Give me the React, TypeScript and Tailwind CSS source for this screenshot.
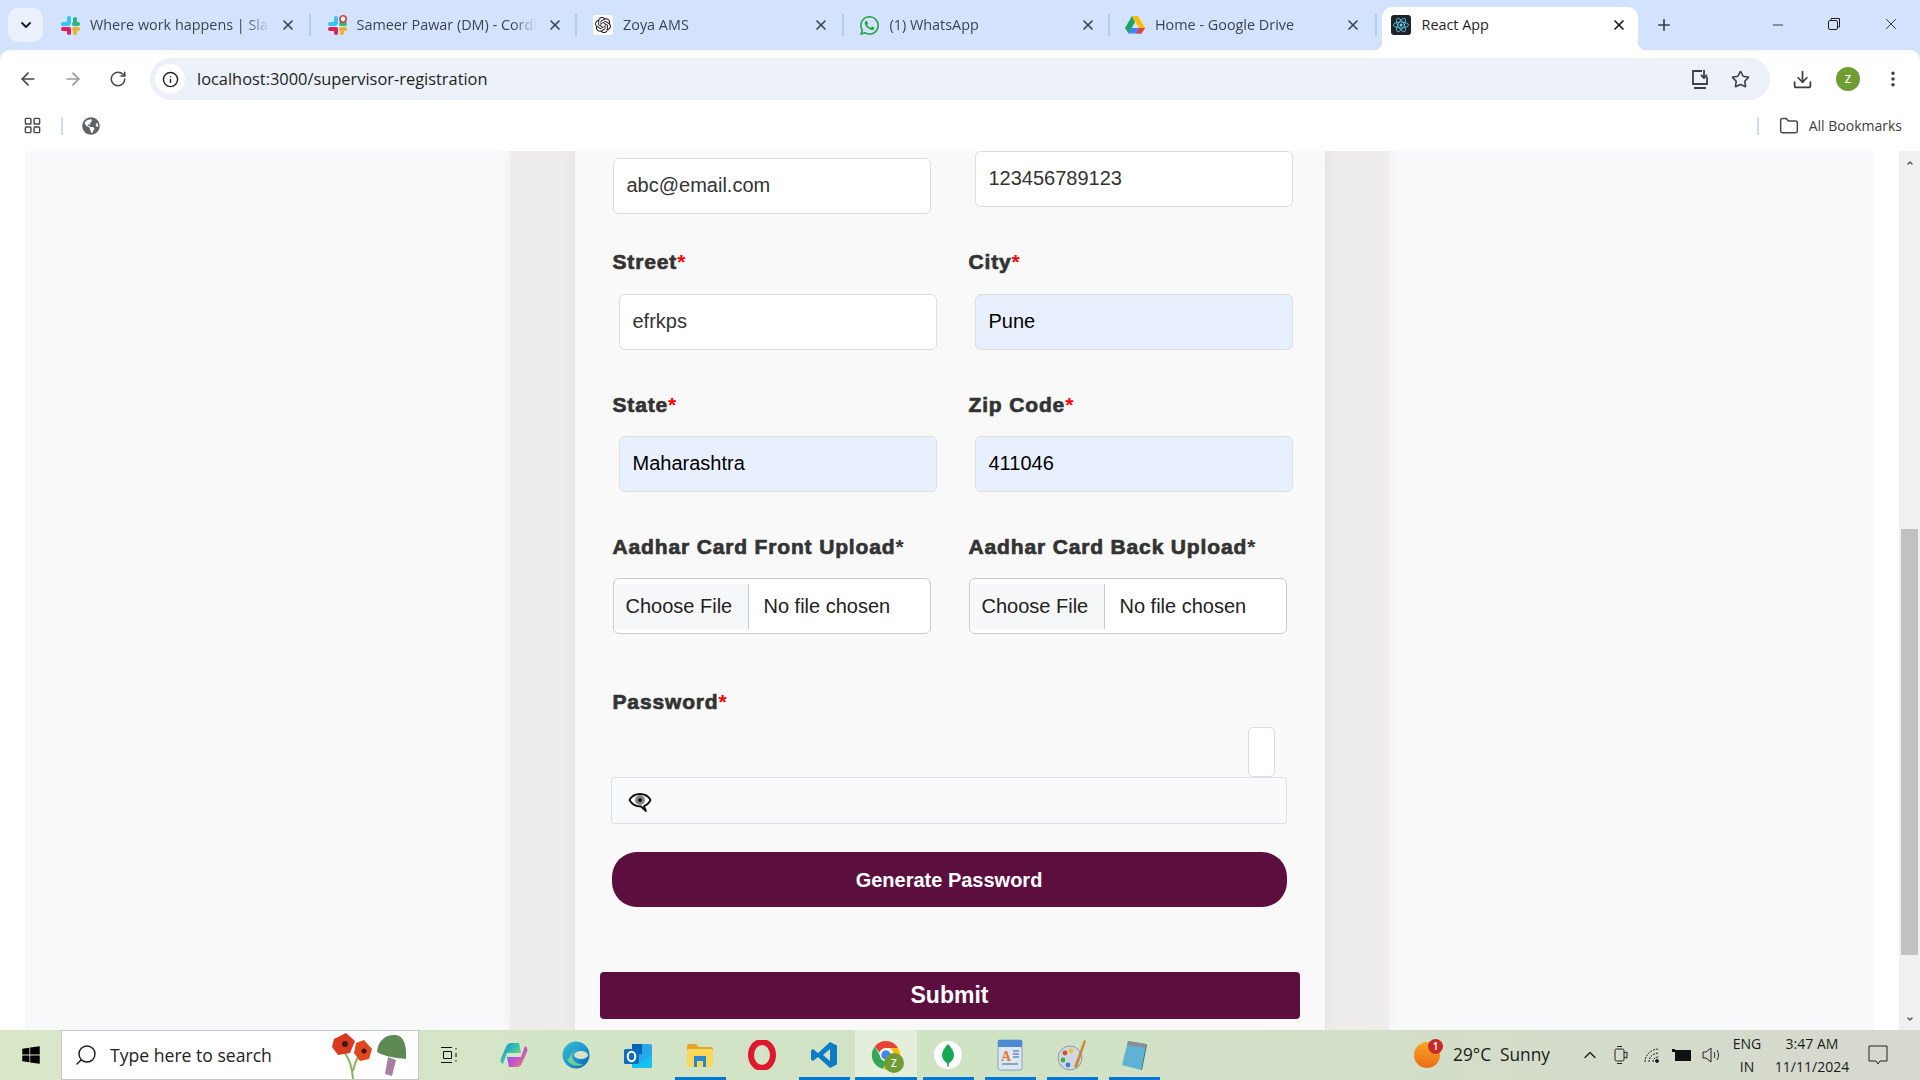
import type { ReactNode } from "react";
import { ArrowLeft, ArrowRight, ChevronDown, ChevronUp, Download, Folder, Info, LayoutGrid, Minus, MoreVertical, Plus, RotateCw, Search, Star, X } from "lucide-react";
import { SiOpenai, SiWhatsapp } from "react-icons/si";
import { FaGlobeAmericas, FaWindows } from "react-icons/fa";

const ui = "font-['Open_Sans',sans-serif]";
const arial = "font-['Liberation_Sans',Arial,sans-serif]";

const Slack = ({ dot = false }: { dot?: boolean }) => (
  <svg width="22" height="22" viewBox="0 0 22 22" className="shrink-0">
    <rect x="8" y="2" width="4" height="9" rx="2" fill="#36c5f0" />
    <rect x="2" y="8" width="9" height="4" rx="2" fill="#36c5f0" />
    <rect x="14" y="3" width="4" height="9" rx="2" fill="#2eb67d" />
    <rect x="13" y="8" width="8" height="4" rx="2" fill="#2eb67d" />
    <rect x="8" y="13" width="4" height="8" rx="2" fill="#e01e5a" />
    <rect x="2" y="13" width="9" height="4" rx="2" fill="#e01e5a" />
    <rect x="14" y="13" width="4" height="8" rx="2" fill="#ecb22e" />
    <rect x="13" y="13" width="8" height="4" rx="2" fill="#ecb22e" />
    {dot && <circle cx="17" cy="5" r="3.2" fill="#fff" stroke="#e3342f" strokeWidth="1.6" />}
  </svg>
);

const Drive = () => (
  <svg width="20" height="20" viewBox="0 0 20 20" className="shrink-0">
    <polygon points="7,1 13,1 20,13 14,13" fill="#fbbc04" />
    <polygon points="7,1 10,7 3.5,18.5 0,13" fill="#1ea362" />
    <polygon points="6,13 20,13 16.5,18.5 3.5,18.5" fill="#4285f4" />
    <polygon points="14,13 20,13 16.5,18.5 11,18.5" fill="#ea4335" />
  </svg>
);

const ReactLogo = () => (
  <span className="flex h-[20px] w-[20px] shrink-0 items-center justify-center rounded-[3px] bg-[#20232a]">
    <svg width="18" height="18" viewBox="-12 -12 24 24" fill="none" stroke="#61dafb" strokeWidth="1">
      <circle r="2" fill="#61dafb" stroke="none" />
      <ellipse rx="10" ry="4" />
      <ellipse rx="10" ry="4" transform="rotate(60)" />
      <ellipse rx="10" ry="4" transform="rotate(120)" />
    </svg>
  </span>
);

type TabProps = { icon: ReactNode; title: string; pl?: string };

const Tab = ({ icon, title, pl = "pl-[15px]" }: TabProps) => (
  <div className={`flex h-[50px] w-[266.5px] shrink-0 items-center ${pl}`}>
    <div className="flex h-[22px] w-[22px] shrink-0 items-center justify-center">{icon}</div>
    <div className="ml-[9px] w-[180px] overflow-hidden pb-[1px] whitespace-nowrap text-[14.4px] text-[#3f4449] [mask-image:linear-gradient(to_right,black_155px,transparent_180px)]">
      {title}
    </div>
    <X size={16} strokeWidth={2.4} className="ml-[10px] shrink-0 text-[#3c4043]" />
    <div className="ml-auto h-[22px] w-[2px] bg-[#b2cbf5]" />
  </div>
);

const Label = ({ text, star = "text-[#ff0000]" }: { text: string; star?: string }) => (
  <div className={`h-6 text-[21px] leading-6 font-bold tracking-[0.85px] whitespace-nowrap text-[#333] [-webkit-text-stroke:0.7px_#333] ${arial}`}>
    {text}
    <span className={`tracking-normal [-webkit-text-stroke:0] ${star}`}>*</span>
  </div>
);

const TextBox = ({ value, filled = false, cls = "" }: { value: string; filled?: boolean; cls?: string }) => (
  <div
    className={`flex h-[56px] w-[318px] items-center rounded-[6px] border border-[#dddddd] px-[13px] pb-[2px] text-[20px] ${arial} ${
      filled ? "bg-[#e8f0fe] text-black" : "bg-white text-[#333]"
    } ${cls}`}
  >
    {value}
  </div>
);

const FileBox = () => (
  <div className={`mt-[19px] flex h-[56px] w-[318px] items-center rounded-[6px] border border-[#cccccc] bg-white px-[1px] text-[20px] text-[#222] ${arial}`}>
    <div className="flex h-[45px] w-[134px] items-center border-r border-[#c8c8c8] bg-[#f6f7f9] pl-[11px]">Choose File</div>
    <div className="pl-[15px]">No file chosen</div>
  </div>
);

const EyeBubble = () => (
  <svg width="24" height="24" viewBox="0 0 24 24" fill="none">
    <path d="M1.5 11C4 6.5 8 5 12 5s8 1.5 10.5 6c-1.5 3-3.5 5-6.5 6l2 5-5-4.500C8 17.500 4 15.500 1.500 11z" fill="#fff" stroke="#111" strokeWidth="1.800" strokeLinejoin="round" />
    <circle cx="12" cy="11" r="5" fill="#888" />
    <circle cx="12" cy="11" r="2" fill="#111" />
  </svg>
);

const Supervisor = () => (
  <div className="flex w-[879px] justify-center bg-[#eeedeb] shadow-[0_0_10px_#eeedeb]">
    <div className="w-[750px] bg-[#f9f9f9] pl-[38px] shadow-[0_0_14px_rgba(0,0,0,0.07)]">
      <div className="grid grid-cols-[356px_1fr]">
        <div className="h-[99px] pt-[7px]">
          <TextBox value="abc@email.com" />
        </div>
        <div className="h-[99px]">
          <TextBox value="123456789123" cls="ml-[6px]" />
        </div>

        <div>
          <Label text="Street" />
          <TextBox value="efrkps" cls="mt-5 ml-[6px]" />
        </div>
        <div>
          <Label text="City" />
          <TextBox value="Pune" filled cls="mt-5 ml-[6px]" />
        </div>

        <div className="mt-[43px]">
          <Label text="State" />
          <TextBox value="Maharashtra" filled cls="mt-[19px] ml-[6px]" />
        </div>
        <div className="mt-[43px]">
          <Label text="Zip Code" />
          <TextBox value="411046" filled cls="mt-[19px] ml-[6px]" />
        </div>

        <div className="mt-[43px]">
          <Label text="Aadhar Card Front Upload" star="text-[#333]" />
          <FileBox />
        </div>
        <div className="mt-[43px]">
          <Label text="Aadhar Card Back Upload" star="text-[#333]" />
          <FileBox />
        </div>
      </div>

      <div className="mt-[56px]">
        <Label text="Password" />
        <div className="mt-[13px] -ml-[1px] flex w-[675px] justify-end pr-[12px]">
          <div className="h-[50px] w-[27px] rounded-[5px] border border-[#dddddd] bg-white" />
        </div>
        <div className="-ml-[2px] flex h-[47px] w-[676px] items-center rounded-[3px] border border-[#e0e0e0] bg-[#f8f9fb] pl-[16px]">
          <EyeBubble />
        </div>
        <button className={`-ml-[1px] mt-[28px] block h-[55px] w-[675px] rounded-[25px] bg-[#5c0f3f] text-center text-[20px] font-bold text-white ${arial}`}>
          Generate Password
        </button>
        <button className={`-ml-[13px] mt-[65px] block h-[47px] w-[700px] rounded-[4px] bg-[#5c0f3f] text-center text-[23px] font-bold text-white ${arial}`}>
          Submit
        </button>
      </div>
    </div>
  </div>
);

type SlotProps = { children: ReactNode; bar?: boolean; active?: boolean };

const Slot = ({ children, bar = false, active = false }: SlotProps) => (
  <div className={`relative flex h-[50px] w-[62px] shrink-0 items-center justify-center ${active ? "bg-white/40" : ""}`}>
    {children}
    {bar && <span className={`absolute bottom-0 h-[3px] bg-[#0078d4] ${active ? "w-full" : "w-[51px]"}`} />}
  </div>
);

const Poppies = () => (
  <svg width="84" height="48" viewBox="0 0 84 48" className="shrink-0">
    <path d="M25 48C24 36 22 30 16 20M25 40C27 32 28 28 34 22" stroke="#8bb65a" strokeWidth="2" fill="none" />
    <path d="M6 8L18 2l9 8-5 12-12 2-6-8z" fill="#d8391f" />
    <circle cx="17" cy="13" r="3" fill="#3a1a10" />
    <path d="M28 12l8-3 8 9-3 10-9 2-6-8z" fill="#e0471f" />
    <circle cx="36" cy="20" r="2.500" fill="#3a1a10" />
    <path d="M49 21C50 9 58 3 68 4c7 1 11 9 10 24-8-1-21-2-29-7z" fill="#5d8a53" />
    <path d="M60 26l8 3-4 16-7-2z" fill="#a97fa0" />
  </svg>
);

const Copilot = () => (
  <svg width="28" height="28" viewBox="0 0 28 28">
    <defs>
      <linearGradient id="cpA" x1="0" y1="0" x2="1" y2="1">
        <stop offset="0" stopColor="#1d7fe0" />
        <stop offset="0.5" stopColor="#37c6b0" />
        <stop offset="1" stopColor="#f5c22c" />
      </linearGradient>
      <linearGradient id="cpB" x1="0" y1="0" x2="1" y2="1">
        <stop offset="0" stopColor="#3f7cf0" />
        <stop offset="0.5" stopColor="#c04fd8" />
        <stop offset="1" stopColor="#f28a4a" />
      </linearGradient>
    </defs>
    <path d="M11 2h8l2 10H7L3 23c-2-1-3-3-2-6L6 6c1-3 3-4 5-4z" fill="url(#cpA)" />
    <path d="M17 26H9l-2-10h14l4-11c2 1 3 3 2 6l-5 11c-1 3-3 4-5 4z" fill="url(#cpB)" />
  </svg>
);

const Edge = () => (
  <svg width="28" height="28" viewBox="0 0 28 28">
    <defs>
      <linearGradient id="edge" x1="0" y1="0" x2="1" y2="1">
        <stop offset="0" stopColor="#36c4c0" />
        <stop offset="0.6" stopColor="#1c8fd8" />
        <stop offset="1" stopColor="#0c59a4" />
      </linearGradient>
    </defs>
    <circle cx="14" cy="14" r="13.500" fill="url(#edge)" />
    <path d="M27 16c-2-6-7-8-12-7-4 1-6 5-4 9 1 3 6 6 11 5-7 4-15 1-17-5 3 1 3-7 9-9 6-1 11 1 13 7z" fill="#7fe07a" opacity="0.800" />
    <ellipse cx="19" cy="14" rx="7" ry="4" fill="#d6e5c5" />
  </svg>
);

const Outlook = () => (
  <svg width="30" height="30" viewBox="0 0 30 30">
    <rect x="9" y="4" width="20" height="24" rx="2" fill="#28a8ea" />
    <rect x="9" y="4" width="10" height="10" fill="#0364b8" />
    <path d="M9 15l10 7 10-7v11a2 2 0 0 1-2 2H11a2 2 0 0 1-2-2z" fill="#14c2f0" />
    <rect x="1" y="9" width="15" height="15" rx="1.500" fill="#0f6cbd" />
    <ellipse cx="8.500" cy="16.500" rx="3.800" ry="4.800" fill="none" stroke="#fff" strokeWidth="2" />
  </svg>
);

const Explorer = () => (
  <svg width="28" height="28" viewBox="0 0 28 28">
    <path d="M1 5a2 2 0 0 1 2-2h7l3 3h12a2 2 0 0 1 2 2v3H1z" fill="#e3a72c" />
    <rect x="1" y="8" width="26" height="18" rx="2" fill="#fbd75b" />
    <path d="M8 15h12v11h-3v-6h-6v6H8z" fill="#2b87d3" />
  </svg>
);

const Opera = () => (
  <svg width="28" height="30" viewBox="0 0 28 30">
    <ellipse cx="14" cy="15" rx="11" ry="13" fill="none" stroke="#e0182d" strokeWidth="6" />
  </svg>
);

const VSCode = () => (
  <svg width="28" height="28" viewBox="0 0 28 28">
    <path d="M20 1l7 3.500v19L20 27 8 16l-5 4-2-1.500V9.500L3 8l5 4zM20 8l-7 6 7 6z" fill="#0a7cc8" />
  </svg>
);

const ChromeZ = () => (
  <div className="relative h-[30px] w-[30px]">
    <svg width="30" height="30" viewBox="0 0 30 30">
      <path d="M15 1a14 14 0 0 1 12 7H15a7 7 0 0 0-6.500 4.500L3.800 6.500A14 14 0 0 1 15 1z" fill="#ea4335" />
      <path d="M3.800 6.500l6 10.500a6 6 0 0 0 6 4l-3.800 7.800A14 14 0 0 1 3.800 6.500z" fill="#34a853" />
      <path d="M27 8a14 14 0 0 1-15 21l6-10a6 6 0 0 0 1-11z" fill="#fbbc04" />
      <circle cx="15" cy="15" r="5.500" fill="#4285f4" stroke="#fff" strokeWidth="1.500" />
    </svg>
    <span className="absolute -right-[3px] -bottom-[3px] flex h-[20px] w-[20px] items-center justify-center rounded-full bg-[#6f9c35] text-[10px] font-semibold text-white">Z</span>
  </div>
);

const Mongo = () => (
  <svg width="30" height="30" viewBox="0 0 30 30">
    <circle cx="15" cy="15" r="14" fill="#fff" />
    <path d="M15 4c4 4 6 8 6 11 0 4-3 7-5 8l-.500 4h-1l-.500-4c-2-1-5-4-5-8 0-3 2-7 6-11z" fill="#13aa52" />
  </svg>
);

const WordPad = () => (
  <svg width="28" height="32" viewBox="0 0 28 32">
    <rect x="2" y="1" width="24" height="30" rx="2" fill="#dbe7f3" stroke="#8ba6c3" />
    <rect x="2" y="1" width="24" height="7" fill="#4d8bd0" />
    <text x="5" y="22" fontSize="14" fontWeight="700" fill="#e8752a" fontFamily="Liberation Serif">A</text>
    <path d="M17 12h6M17 15h6M17 18h6M6 25h16" stroke="#6a8fb8" strokeWidth="1.400" />
  </svg>
);

const Palette = () => (
  <svg width="32" height="34" viewBox="0 0 32 34">
    <ellipse cx="14" cy="20" rx="12" ry="12" fill="#cfd8df" stroke="#8c9aa5" />
    <circle cx="9" cy="15" r="2.400" fill="#d9472f" />
    <circle cx="15" cy="13" r="2.400" fill="#f0c12c" />
    <circle cx="7" cy="22" r="2.400" fill="#3db04a" />
    <circle cx="12" cy="27" r="2.400" fill="#3a7bd5" />
    <path d="M28 2l2 1-9 27-3-1z" fill="#c98a3c" />
  </svg>
);

const Notepad = () => (
  <svg width="28" height="32" viewBox="0 0 28 32">
    <path d="M8 2l18 3-5 26-19-5z" fill="#5fb2d4" />
    <path d="M8 2l18 3-1 4L7 6z" fill="#8a8f96" />
    <path d="M21 31l5-26 1 1-5 25z" fill="#3d6f85" />
  </svg>
);

const App = () => {
  return (
    <div className="flex h-screen w-[1920px] flex-col overflow-hidden bg-[#d3e3fd]">
      {/* tab strip */}
      <div className={`flex h-[50px] shrink-0 items-start ${ui}`}>
        <div className="mt-[8px] ml-[8px] flex h-[34px] w-[35px] items-center justify-center rounded-[10px] bg-[#eaf1fc]">
          <ChevronDown size={16} strokeWidth={3} className="text-[#1f1f1f]" />
        </div>
        <div className="ml-[1px] flex">
          <Tab icon={<Slack />} title="Where work happens | Slack" />
          <Tab icon={<Slack dot />} title="Sameer Pawar (DM) - Cordly" />
          <Tab icon={<span className="flex h-[20px] w-[20px] items-center justify-center rounded-[3px] bg-white"><SiOpenai size={16} color="#222" /></span>} title="Zoya AMS" />
          <Tab icon={<SiWhatsapp size={19} color="#25a244" />} title="(1) WhatsApp" />
          <Tab icon={<Drive />} title="Home - Google Drive" pl="pl-[14px]" />
        </div>
        <div className="relative mt-[7px] ml-[5px] flex h-[43px] w-[256px] shrink-0 items-center rounded-t-[10px] bg-white pb-[7px] pl-[9px]">
          <span className="absolute bottom-0 -left-[8px] h-[8px] w-[8px] bg-[radial-gradient(circle_at_0_0,transparent_8px,white_8.500px)]" />
          <span className="absolute -right-[8px] bottom-0 h-[8px] w-[8px] bg-[radial-gradient(circle_at_100%_0,transparent_8px,white_8.500px)]" />
          <ReactLogo />
          <div className="ml-[11px] w-[177px] text-[14.4px] text-[#1f1f1f]">React App</div>
          <X size={16} strokeWidth={2.600} className="ml-[12px] text-[#1f1f1f]" />
        </div>
        <Plus size={18} strokeWidth={2.200} className="mt-[16px] ml-[17px] text-[#3c4043]" />
        <div className="ml-[97px] flex h-[50px] items-start pt-[17px]">
          <Minus size={16} strokeWidth={1.300} className="text-[#222]" />
          <svg width="14" height="14" viewBox="0 0 14 14" fill="none" stroke="#222" className="ml-[41px]">
            <rect x="1.500" y="3.500" width="9" height="9" rx="1.500" />
            <path d="M4 3V1.500h8.500V10H11" />
          </svg>
          <X size={18} strokeWidth={1.200} className="-mt-[2px] ml-[41px] text-[#222]" />
        </div>
      </div>

      {/* toolbar */}
      <div className="flex h-[54px] shrink-0 items-start rounded-t-[10px] bg-white pt-[8px]">
        <div className="flex h-[42px] items-center text-[#474747]">
          <ArrowLeft size={20} className="ml-[18px]" />
          <ArrowRight size={20} className="ml-[25px] text-[#9b9b9b]" />
          <RotateCw size={18} className="ml-[26px]" />
        </div>
        <div className={`ml-[23px] flex h-[42px] w-[1620px] items-center rounded-full bg-[#ebf0f9] ${ui}`}>
          <div className="ml-[5px] flex h-[30px] w-[30px] items-center justify-center rounded-full bg-white">
            <Info size={17} className="text-[#222]" />
          </div>
          <div className="ml-[12px] text-[16.4px] text-[#1f1f1f]">localhost:3000/supervisor-registration</div>
          <svg width="22" height="22" viewBox="0 0 22 22" fill="none" stroke="#3c4043" strokeWidth="1.800" className="ml-auto">
            <path d="M13 3H4v13h14v-7M5 20h12M15 2v8m-3-3l3 3 3-3" />
          </svg>
          <Star size={19} strokeWidth={2} className="mr-[20px] ml-[20px] text-[#3c4043]" />
        </div>
        <div className="flex h-[42px] items-center text-[#3c4043]">
          <Download size={21} strokeWidth={2} className="ml-[22px]" />
          <span className={`ml-[23px] flex h-[24px] w-[24px] items-center justify-center rounded-full bg-[#6f9c35] text-[11px] font-semibold text-white ${ui}`}>Z</span>
          <MoreVertical size={20} strokeWidth={2.200} className="ml-[23px]" />
        </div>
      </div>

      {/* bookmarks bar */}
      <div className={`flex h-[47px] shrink-0 items-center bg-white pb-[4px] ${ui}`}>
        <LayoutGrid size={19} strokeWidth={1.800} className="ml-[23px] text-[#474747]" />
        <div className="ml-[19px] h-[18px] w-[2px] bg-[#c9dcf8]" />
        <FaGlobeAmericas size={18} className="ml-[19px] text-[#5f6368]" />
        <div className="ml-auto h-[18px] w-[2px] bg-[#c9dcf8]" />
        <Folder size={20} strokeWidth={1.800} className="ml-[20px] text-[#474747]" />
        <div className="mr-[18px] ml-[10px] text-[14px] text-[#3c4043]">All Bookmarks</div>
      </div>

      {/* page */}
      <div className="flex min-h-0 flex-1 bg-white">
        <div className="ml-[25px] flex w-[1849px] justify-start overflow-hidden bg-[#f8f9fb] pl-[485px]">
          <Supervisor />
        </div>
        <div className="ml-[25px] flex w-[21px] flex-col items-center bg-[#f1f1f1] pt-[8px]">
          <ChevronUp size={12} strokeWidth={4} className="h-[8px] text-[#505050]" />
          <div className="mt-[362px] h-[426px] w-[17px] bg-[#c1c1c1]" />
          <ChevronDown size={12} strokeWidth={4} className="mt-[60px] h-[8px] text-[#505050]" />
        </div>
      </div>

      {/* taskbar */}
      <div className={`flex h-[50px] shrink-0 items-center bg-gradient-to-r from-[#d9e6c8] via-[#d0e3c4] to-[#d6d9ce] text-[#1a1a1a] ${ui}`}>
        <div className="flex h-[50px] w-[61px] shrink-0 items-center justify-center">
          <FaWindows size={20} color="#000" />
        </div>
        <div className="flex h-[50px] w-[358px] shrink-0 items-center border border-[#c8c8c8] bg-white">
          <Search size={24} strokeWidth={1.400} className="ml-[12px] -scale-x-100" />
          <span className="ml-[12px] text-[17.6px] text-[#222]">Type here to search</span>
          <div className="mr-[6px] ml-auto">
            <Poppies />
          </div>
        </div>
        <div className="mr-[2px]">
          <Slot>
            <svg width="20" height="20" viewBox="0 0 20 20" fill="none" stroke="#111">
              <path d="M1 2.500h11M1 17.500h11M3.500 6.500h8v7h-8zM16 3v1.500M16 8v4M16 15v1.500" />
            </svg>
          </Slot>
        </div>
        <Slot><Copilot /></Slot>
        <Slot><Edge /></Slot>
        <Slot><Outlook /></Slot>
        <Slot bar><Explorer /></Slot>
        <Slot><Opera /></Slot>
        <Slot bar><VSCode /></Slot>
        <Slot bar active><ChromeZ /></Slot>
        <Slot bar><Mongo /></Slot>
        <Slot bar><WordPad /></Slot>
        <Slot bar><Palette /></Slot>
        <Slot bar><Notepad /></Slot>

        <div className="ml-[249px] flex items-center">
          <div className="relative h-[26px] w-[26px] rounded-full bg-gradient-to-b from-[#f5a623] to-[#ec6a17]">
            <span className="absolute -top-[3px] right-[-3px] flex h-[15px] w-[15px] items-center justify-center rounded-full bg-[#c92a2a] text-[10px] font-semibold text-white">1</span>
          </div>
          <span className="ml-[13px] w-[110px] text-[17.3px] whitespace-nowrap">29°C&nbsp; Sunny</span>
          <ChevronUp size={20} strokeWidth={1.500} className="ml-[17px]" />
          <svg width="16" height="20" viewBox="0 0 16 20" fill="none" stroke="#222" className="ml-[13px]">
            <rect x="2" y="4" width="9" height="12" rx="1.500" />
            <path d="M11 8l3-1v6l-3-1M4 1.500h5M4 18.500h5" />
          </svg>
          <svg width="20" height="20" viewBox="0 0 20 20" fill="none" stroke="#222" className="ml-[13px]">
            <path d="M3 17c0-7 6-13 14-13M7 17c0-5 4-9 10-9M11 17c0-3 2-5 6-5" strokeDasharray="2 1" />
            <circle cx="15" cy="16" r="1.500" fill="#222" />
          </svg>
          <svg width="20" height="16" viewBox="0 0 20 16" className="ml-[10px]">
            <rect x="3" y="3" width="16" height="11" fill="#111" />
            <path d="M0 2h3v3H0z" fill="#111" />
          </svg>
          <svg width="20" height="20" viewBox="0 0 20 20" fill="none" stroke="#222" className="ml-[9px]">
            <path d="M2 7h3l5-4v14l-5-4H2zM13 7c1 2 1 4 0 6M16 5c2 3 2 7 0 10" />
          </svg>
          <div className="ml-[3px] flex w-[46px] flex-col items-center text-[14px] leading-[23px]">
            <span>ENG</span>
            <span>IN</span>
          </div>
          <div className="ml-[2px] flex w-[80px] flex-col items-center text-[14px] leading-[23px]">
            <span>3:47 AM</span>
            <span>11/11/2024</span>
          </div>
          <svg width="20" height="22" viewBox="0 0 20 22" fill="none" stroke="#222" className="ml-[16px]">
            <path d="M1 2h18v15h-7l-2 3-2-3H1z" />
          </svg>
        </div>
      </div>
    </div>
  );
};

export default App;
